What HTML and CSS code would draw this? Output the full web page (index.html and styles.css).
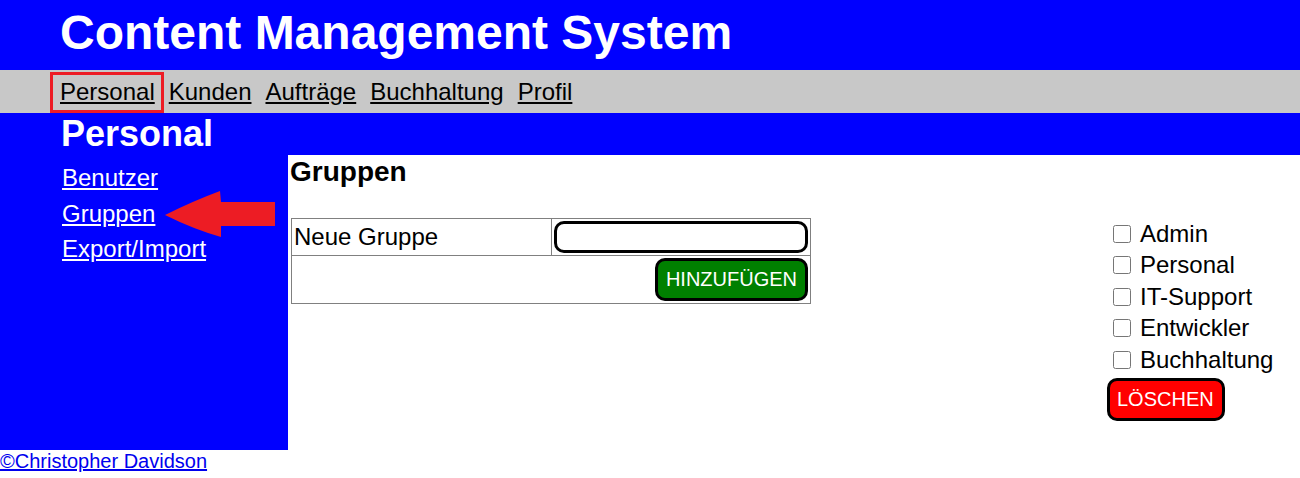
FILE: index.html
```html
<!DOCTYPE html>
<html lang="de">
<head>
    <meta charset="UTF-8">
    <meta name="viewport" content="width=device-width, initial-scale=1.0">
    <title>Gruppen - Content Management System</title>
    <link rel="stylesheet" href="styles.css">
</head>
<body>
    <header class="top">
        <h1>Content Management System</h1>
    </header>
    <nav class="menu">
        <a href="#">Personal</a>
        <a href="#">Kunden</a>
        <a href="#">Aufträge</a>
        <a href="#">Buchhaltung</a>
        <a href="#">Profil</a>
        <span class="mark"></span>
    </nav>
    <div class="main">
        <h2 class="section">Personal</h2>
        <div class="layout">
            <ul class="side">
                <li><a href="#">Benutzer</a></li>
                <li><a href="#">Gruppen</a></li>
                <li><a href="#">Export/Import</a></li>
            </ul>
            <div class="content">
                <h3>Gruppen</h3>
                <div class="panels">
                    <form class="new-group">
                        <table>
                            <tr>
                                <td class="label">Neue Gruppe</td>
                                <td><input type="text" name="gruppe"></td>
                            </tr>
                            <tr>
                                <td colspan="2" class="actions"><button type="submit" class="btn add">HINZUFÜGEN</button></td>
                            </tr>
                        </table>
                    </form>
                    <form class="group-list">
                        <label class="row"><input type="checkbox">Admin</label>
                        <label class="row"><input type="checkbox">Personal</label>
                        <label class="row"><input type="checkbox">IT-Support</label>
                        <label class="row"><input type="checkbox">Entwickler</label>
                        <label class="row"><input type="checkbox">Buchhaltung</label>
                        <button type="submit" class="btn delete">LÖSCHEN</button>
                    </form>
                </div>
            </div>
        </div>
        <svg class="arrow" width="111" height="47" viewBox="0 0 111 47">
            <path d="M0 24 Q28 10 55 0 L56 11 L110 11 L110 35 L56 35 L56 46 Q28 38 0 24 Z" fill="#ed1c24"/>
        </svg>
    </div>
    <footer>
        <a href="#">©Christopher Davidson</a>
    </footer>
</body>
</html>
```

FILE: styles.css
```css
body {
    font-family: "Liberation Sans", Arial, sans-serif;
    margin: 0;
    padding: 0;
    background-color: white;
}
.top {
    background-color: #0000ff;
    color: white;
    height: 70px;
    padding: 5px 0 0 60px;
    box-sizing: border-box;
}
.top h1 {
    margin: 0;
    font-size: 48px;
    line-height: 55px;
}
.menu {
    position: relative;
    background-color: #c8c8c8;
    height: 43px;
    padding-left: 60px;
    display: flex;
    align-items: center;
    gap: 14px;
}
.menu a {
    color: black;
    font-size: 24px;
}
.mark {
    position: absolute;
    left: 50px;
    top: 2px;
    width: 114px;
    height: 41px;
    border: 3px solid #ed1c24;
    box-sizing: border-box;
}
.main {
    position: relative;
    background-color: #0000ff;
}
.section {
    margin: 0;
    color: white;
    font-size: 36px;
    height: 42px;
    line-height: 42px;
    padding-left: 61px;
}
.layout {
    display: flex;
    height: 295px;
}
.side {
    list-style: none;
    width: 288px;
    margin: 0;
    padding: 5px 0 0 62px;
    box-sizing: border-box;
    font-size: 24px;
    line-height: 35.5px;
}
.side a {
    color: white;
}
.content {
    flex: 1;
    background-color: white;
    padding: 1px 0 0 2px;
}
.content h3 {
    margin: 0 0 30px 0;
    font-size: 28px;
}
.panels {
    display: flex;
    justify-content: space-between;
}
.new-group table {
    border-collapse: collapse;
    width: 520px;
    margin-left: 1px;
    font-size: 24px;
}
.new-group td {
    border: 1px solid #808080;
    padding: 2px;
}
.new-group .label {
    width: 50%;
}
.new-group input {
    width: 100%;
    height: 32px;
    box-sizing: border-box;
    border: 3px solid black;
    border-radius: 10px;
    font-size: 20px;
    display: block;
}
.actions {
    text-align: right;
}
.btn {
    font-family: "Liberation Sans", Arial, sans-serif;
    font-size: 20px;
    line-height: 23px;
    color: white;
    border: 3px solid black;
    border-radius: 10px;
    padding: 7px 8px;
    cursor: pointer;
}
.add {
    background-color: #008000;
}
.delete {
    background-color: #ff0000;
    margin-top: 2px;
    padding: 7px 8px 7px 7px;
}
.group-list {
    width: 193px;
    font-size: 24px;
}
.row {
    display: flex;
    align-items: center;
    height: 31.5px;
}
.row input {
    width: 18px;
    height: 18px;
    margin: 0 9px 0 6px;
}
.arrow {
    position: absolute;
    left: 165px;
    top: 78px;
}
footer {
    font-size: 20px;
}
footer a {
    color: #0000ee;
}
```
